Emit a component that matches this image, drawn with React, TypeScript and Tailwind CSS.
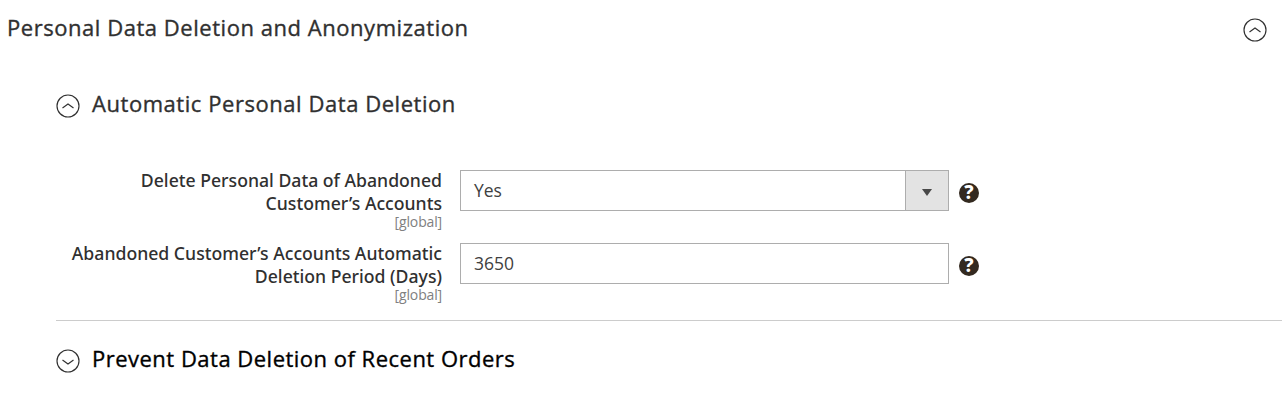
import React from 'react';

interface CircleChevronProps {
    open: boolean;
}

const CircleChevron: React.FC<CircleChevronProps> = ({ open }) => (
    <svg className="h-6 w-6 shrink-0" viewBox="0 0 24 24" fill="none" stroke="#303030" strokeWidth={1.15}>
        <circle cx="12" cy="12" r="11" />
        <path d={open ? 'M6.5 14L12 10L17.5 14' : 'M6.5 11L12 15L17.5 11'} />
    </svg>
);

const HelpIcon: React.FC = () => (
    <span className="ml-[10px] mt-[13px] flex h-5 w-5 shrink-0 items-center justify-center rounded-full bg-[#33291f] pb-px font-['Noto_Sans',sans-serif] text-[19px] font-extrabold leading-none text-white">
        ?
    </span>
);

interface FieldProps {
    label: string[];
    children: React.ReactNode;
}

const Field: React.FC<FieldProps> = ({ label, children }) => (
    <div className="flex h-[73px] items-start">
        <div className="-mt-px w-[442px] shrink-0 text-right">
            <div className="font-['Noto_Sans',sans-serif] text-[17.65px] font-medium leading-[23px] text-[#303030]">
                {label.map(line => (
                    <div key={line} className="whitespace-nowrap">{line}</div>
                ))}
            </div>
            <div className="-mt-px text-sm leading-[15px] tracking-[-0.15px] text-[#808080]">[global]</div>
        </div>
        <div className="ml-[18px] flex h-[41px] w-[489px] border border-[#adadad] text-[17.5px] text-[#404040]">
            {children}
        </div>
        <HelpIcon />
    </div>
);

const App: React.FC = () => (
    <div className="h-[411px] w-[1286px] overflow-hidden bg-white font-['Open_Sans','Noto_Sans',sans-serif] text-[#303030]">
        <div className="flex h-[92px] justify-between pl-[7px] pr-[19px] pt-[14px]">
            <h2 className="-mt-[2px] whitespace-nowrap text-[22px] leading-[30px] tracking-[0.54px] [-webkit-text-stroke:0.35px_#303030]">
                Personal Data Deletion and Anonymization
            </h2>
            <div className="pt-1"><CircleChevron open /></div>
        </div>
        <div className="flex h-[78px] items-start gap-3 pl-14">
            <div className="pt-[2px]"><CircleChevron open /></div>
            <h3 className="-mt-1 whitespace-nowrap text-[22px] leading-[30px] tracking-[0.55px] [-webkit-text-stroke:0.35px_#303030]">
                Automatic Personal Data Deletion
            </h3>
        </div>
        <Field label={['Delete Personal Data of Abandoned', 'Customer’s Accounts']}>
            <span className="flex-1 pl-[13px] leading-[39px]">Yes</span>
            <span className="flex w-[43px] items-center justify-center border-l border-[#adadad] bg-[#e3e3e3]">
                <svg className="mt-[3px] h-[7px] w-[10px]" viewBox="0 0 10 7" fill="#484848">
                    <path d="M0 0H10L5 7Z" />
                </svg>
            </span>
        </Field>
        <Field label={['Abandoned Customer’s Accounts Automatic', 'Deletion Period (Days)']}>
            <span className="flex-1 pl-[13px] leading-[39px]">3650</span>
        </Field>
        <div className="ml-14 mr-1 mt-1 flex h-[91px] items-start gap-3 border-t border-[#cccccc] pt-[24px]">
            <div className="pt-1"><CircleChevron open={false} /></div>
            <h3 className="-mt-[2px] whitespace-nowrap text-[22px] leading-[30px] tracking-[0.49px] text-black [-webkit-text-stroke:0.35px_#000000]">
                Prevent Data Deletion of Recent Orders
            </h3>
        </div>
    </div>
);

export default App;
